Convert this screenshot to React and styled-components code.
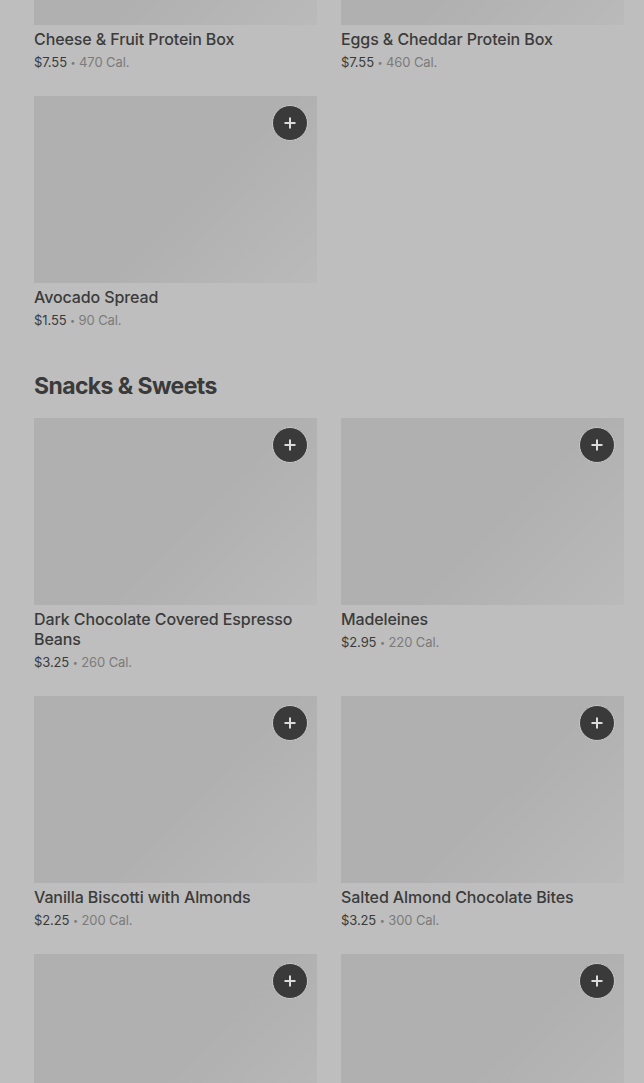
import React from "react";
import styled, { createGlobalStyle } from "styled-components";

const GlobalStyle = createGlobalStyle`
  html, body {
    margin: 0;
    padding: 0;
    background: #bebebe;
    overflow: hidden;
  }
  body {
    font-family: Inter, "Noto Sans", "Liberation Sans", sans-serif;
    -webkit-font-smoothing: antialiased;
  }
`;

const sections = [
  {
    title: "Breakfast",
    hidden: true,
    items: [
      { name: "Cheese & Fruit Protein Box", price: "$7.55", cal: 470 },
      { name: "Eggs & Cheddar Protein Box", price: "$7.55", cal: 460 },
      { name: "Avocado Spread", price: "$1.55", cal: 90 },
    ],
  },
  {
    title: "Snacks & Sweets",
    items: [
      { name: "Dark Chocolate Covered Espresso Beans", price: "$3.25", cal: 260 },
      { name: "Madeleines", price: "$2.95", cal: 220 },
      { name: "Vanilla Biscotti with Almonds", price: "$2.25", cal: 200 },
      { name: "Salted Almond Chocolate Bites", price: "$3.25", cal: 300 },
      { name: "Chocolate Chip Cookie", price: "$2.45", cal: 380 },
      { name: "Marshmallow Dream Bar", price: "$2.45", cal: 210 },
    ],
  },
];

const Page = styled.main`
  padding: 0 20px 0 34px;
  /* page is scrolled: first row of images is cut at the top */
  margin-top: -162px;
`;

const Section = styled.section`
  & + & {
    margin-top: 40px;
  }
`;

const Heading = styled.h2`
  margin: 0 0 16px;
  font-size: 23px;
  line-height: 32px;
  font-weight: 700;
  letter-spacing: -0.6px;
  color: #3a3a3a;
`;

const Grid = styled.div`
  display: grid;
  grid-template-columns: 283px 283px;
  column-gap: 24px;
  row-gap: 24px;
  align-items: start;
`;

const Card = styled.article`
  display: flex;
  flex-direction: column;
`;

const Thumb = styled.div`
  position: relative;
  height: 187px;
  background: linear-gradient(135deg, #b0b0b0 0%, #b0b0b0 55%, #bababa 100%);
`;

const AddButton = styled.button`
  position: absolute;
  top: 9px;
  right: 9px;
  width: 36px;
  height: 36px;
  padding: 0;
  border-radius: 50%;
  border: 1px solid #c8c8c8;
  background: #3a3a3a;
  display: flex;
  align-items: center;
  justify-content: center;
  cursor: pointer;
`;

const Name = styled.div`
  margin-top: 4px;
  font-size: 16px;
  line-height: 20px;
  font-weight: 500;
  letter-spacing: -0.1px;
  color: #3b3b3b;
`;

const Meta = styled.div`
  margin-top: 3px;
  height: 20px;
  font-size: 13px;
  line-height: 20px;
  letter-spacing: -0.1px;
  color: #7b7b7b;
`;

const Price = styled.span`
  color: #3b3b3b;
`;

const Dot = styled.span`
  font-size: 9px;
  line-height: 0;
  vertical-align: 1px;
`;

const Plus = () => (
  <svg width="14" height="14" viewBox="0 0 14 14">
    <path d="M7 1.5v11M1.5 7h11" stroke="#dcdcdc" strokeWidth="2" />
  </svg>
);

const Item = ({ item }) => (
  <Card>
    <Thumb>
      <AddButton aria-label="Add">
        <Plus />
      </AddButton>
    </Thumb>
    <Name>{item.name}</Name>
    <Meta>
      <Price>{item.price}</Price> <Dot>•</Dot> {item.cal} Cal.
    </Meta>
  </Card>
);

export default function App() {
  return (
    <>
      <GlobalStyle />
      <Page>
        {sections.map((s) => (
          <Section key={s.title}>
            {!s.hidden && <Heading>{s.title}</Heading>}
            <Grid>
              {s.items.map((it) => (
                <Item key={it.name} item={it} />
              ))}
            </Grid>
          </Section>
        ))}
      </Page>
    </>
  );
}
